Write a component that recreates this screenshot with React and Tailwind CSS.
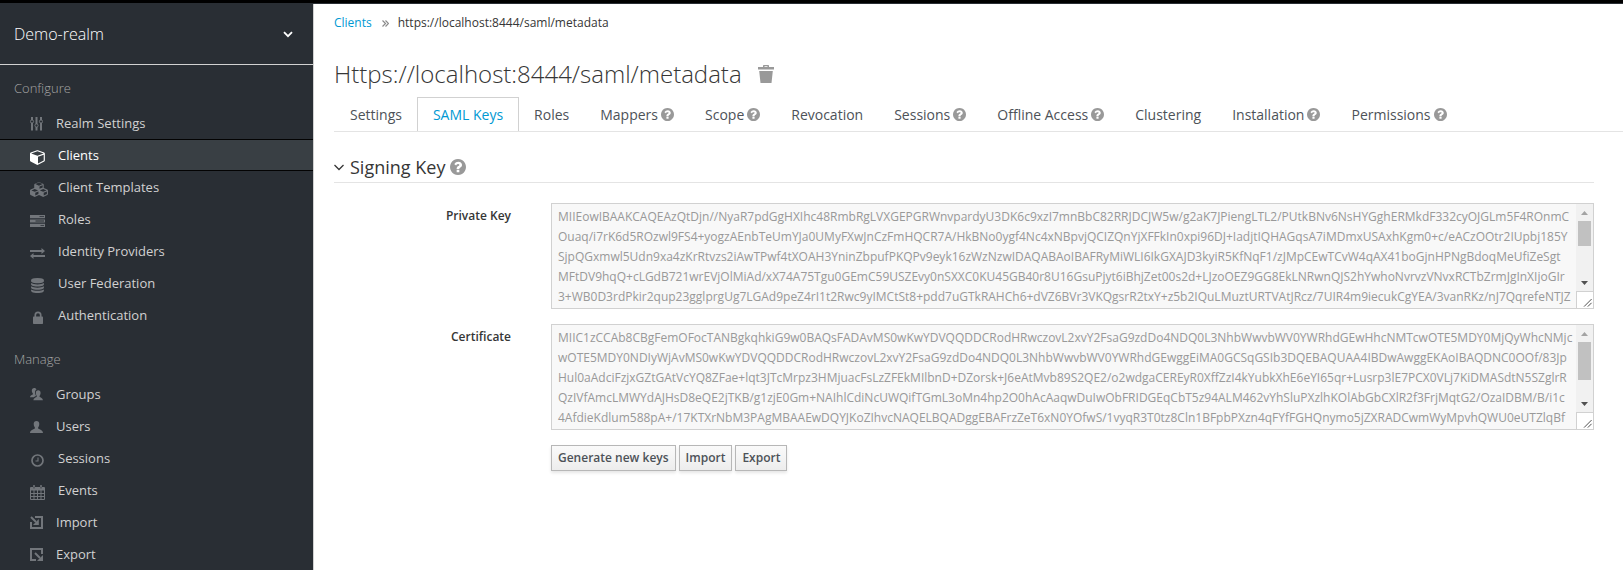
import React from "react";

const FA = {
  cube: ["0 0 1792 1792", "M896 1629l640-349v-636l-640 233v752zM832 764l698-254-698-254-698 254zM1664 512v768q0 35-18 65t-49 47l-704 384q-28 16-61 16t-61-16l-704-384q-31-17-49-47t-18-65v-768q0-40 23-73t61-47l704-256q22-8 44-8t44 8l704 256q38 14 61 47t23 73z"],
  cubes: ["0 0 2304 1792", "M640 1632l384-192v-314l-384 164v342zM576 1178l404-173-404-173-404 173zM1664 1632l384-192v-314l-384 164v342zM1600 1178l404-173-404-173-404 173zM1152 807l384-165v-266l-384 164v267zM1088 428l441-189-441-189-441 189zM2176 1024v416q0 36-19 67t-52 47l-448 224q-25 14-57 14t-57-14l-448-224q-5-2-7-4-2 2-7 4l-448 224q-25 14-57 14t-57-14l-448-224q-33-16-52-47t-19-67v-416q0-38 21.500-70t56.500-48l434-186v-400q0-38 21.500-70t56.500-48l448-192q23-10 50-10t50 10l448 192q35 16 56.500 48t21.500 70v400l434 186q36 16 57 48t21 70z"],
  database: ["128 0 1536 1792", "M896 768q237 0 443-43t325-127v170q0 69-103 128t-280 93.500-385 34.500-385-34.500-280-93.500-103-128v-170q119 84 325 127t443 43zm0 768q237 0 443-43t325-127v170q0 69-103 128t-280 93.500-385 34.500-385-34.500-280-93.500-103-128v-170q119 84 325 127t443 43zm0-384q237 0 443-43t325-127v170q0 69-103 128t-280 93.500-385 34.500-385-34.500-280-93.500-103-128v-170q119 84 325 127t443 43zm0-1152q208 0 385 34.500t280 93.500 103 128v128q0 69-103 128t-280 93.500-385 34.500-385-34.500-280-93.500-103-128v-128q0-69 103-128t280-93.500 385-34.500z"],
  help: ["128 128 1536 1536", "M1024 1376v-192q0-14-9-23t-23-9h-192q-14 0-23 9t-9 23v192q0 14 9 23t23 9h192q14 0 23-9t9-23zm256-672q0-88-55.500-163t-138.500-116-170-41q-243 0-371 213-15 24 8 42l132 100q7 6 19 6 16 0 25-12 53-68 86-92 34-24 86-24 48 0 85.500 26t37.500 59q0 38-20 61t-68 45q-63 28-115.500 86.500t-52.500 125.500v36q0 14 9 23t23 9h192q14 0 23-9t9-23q0-19 21.500-49.500t54.500-49.500q32-18 49-28.500t46-35 44.500-48 28-60.500 12.500-81zm384 192q0 209-103 385.500t-279.500 279.500-385.500 103-385.500-103-279.500-279.500-103-385.500 103-385.500 279.500-279.500 385.500-103 385.500 103 279.500 279.500 103 385.500z"],
};

function Glyph({ name, className }) {
  const [viewBox, d] = FA[name];
  return (
    <svg viewBox={viewBox} className={className} fill="currentColor" aria-hidden="true">
      <path d={d} />
    </svg>
  );
}

const icons = {
  sliders: (
    <svg viewBox="0 0 13 14" className="h-3.5 w-[13px]" aria-hidden="true">
      <g fill="currentColor">
        <rect x="1" y="0" width="2" height="3" /><rect x="1" y="6" width="2" height="7.500" />
        <rect x="5.500" y="0" width="2" height="7" /><rect x="5.500" y="10" width="2" height="3.500" />
        <rect x="10" y="0" width="2" height="3" /><rect x="10" y="6" width="2" height="7.500" />
      </g>
      <g fill="none" stroke="currentColor">
        <circle cx="2" cy="4.500" r="1.600" /><circle cx="6.500" cy="8.500" r="1.600" /><circle cx="11" cy="4.500" r="1.600" />
      </g>
    </svg>
  ),
  cube: <Glyph name="cube" className="size-4" />,
  cubes: <Glyph name="cubes" className="h-[15px] w-[19px]" />,
  tasks: (
    <svg viewBox="0 0 15 12" className="h-3 w-[15px]" fill="currentColor" aria-hidden="true">
      <path fillRule="evenodd" d="M0 0h15v3.200H0zM9.500 1.200v.9H14v-.9zM0 4.400h15v3.200H0zM5.500 5.500v.9H14v-.9zM0 8.800h15V12H0zM10.500 9.900v.9H14v-.9z" />
    </svg>
  ),
  exchange: (
    <svg viewBox="0 0 15 11" className="h-[11px] w-[15px]" fill="currentColor" aria-hidden="true">
      <path d="M0 2h11.500V0L15 3l-3.500 3V4H0zM15 7H3.500V5L0 8l3.500 3V9H15z" />
    </svg>
  ),
  database: <Glyph name="database" className="h-[15px] w-[13px]" />,
  lock: (
    <svg viewBox="0 0 10 13" className="h-[13px] w-2.5" aria-hidden="true">
      <rect x="0" y="5.500" width="10" height="7.500" rx=".7" fill="currentColor" />
      <path d="M2.300 6V4a2.700 2.700 0 0 1 5.400 0v2" fill="none" stroke="currentColor" strokeWidth="1.700" />
    </svg>
  ),
  groups: (
    <svg viewBox="0 0 13 13" className="size-[13px]" fill="currentColor" aria-hidden="true">
      <path d="M1.800 2.800C1.800 1 2.700 0 4.200 0c1.200 0 2 .6 2.300 1.600C5.300 2.300 4.900 3.500 5 5c.1 1 .4 1.800 1 2.500-.2.800-1.400 1-2.300 1.700H0c.1-1.700 1.300-2 2.700-2.700.4-.3.400-.8 0-1.300C2 4.500 1.800 3.700 1.800 2.800z" />
      <path d="M5.800 5c0-1.800.9-2.800 2.400-2.800s2.400 1 2.400 2.800c0 .9-.2 1.700-.8 2.400-.4.500-.4 1.200 0 1.500 1.400.8 3 1.200 3.100 3.300H3.400c.1-2.100 1.700-2.500 3.100-3.300.4-.3.400-1 0-1.500-.5-.7-.7-1.500-.7-2.400z" />
    </svg>
  ),
  user: (
    <svg viewBox="0 0 13 12" className="h-3 w-[13px]" fill="currentColor" aria-hidden="true">
      <path d="M3.700 3C3.700 1.100 4.700 0 6.500 0s2.800 1.100 2.800 3c0 1.300-.3 2.400-1 3.200-.4.500-.3 1.200.2 1.500C10.400 8.700 12.800 9 13 12H0c.2-3 2.600-3.300 4.500-4.300.5-.3.600-1 .2-1.500-.7-.8-1-1.900-1-3.200z" />
    </svg>
  ),
  clock: (
    <svg viewBox="0 0 13 13" className="size-[13px]" fill="none" stroke="currentColor" aria-hidden="true">
      <circle cx="6.500" cy="6.500" r="5.500" strokeWidth="1.700" />
      <path d="M7 3.500V7H4.500" strokeWidth="1.100" />
    </svg>
  ),
  calendar: (
    <svg viewBox="0 0 15 15" className="size-[15px]" fill="currentColor" aria-hidden="true">
      <path fillRule="evenodd" d="M0 3Q0 2 1 2h2V1.200Q3 0 4 0t1 1.200V2h5V1.200Q10 0 11 0t1 1.200V2h2q1 0 1 1v11q0 1-1 1H1q-1 0-1-1zM1 5.500V8h2.500V5.500zm3.500 0V8H7V5.500zM8 5.500V8h2.500V5.500zm3.500 0V8H14V5.500zM1 9v2h2.500V9zm3.500 0v2H7V9zM8 9v2h2.500V9zm3.500 0v2H14V9zM1 12v2h2.500v-2zm3.500 0v2H7v-2zM8 12v2h2.500v-2zm3.500 0v2H14v-2zM3.600 1.500v2h.8v-2zm7 0v2h.8v-2z" />
    </svg>
  ),
  importBox: (
    <svg viewBox="0 0 13 13" className="size-[13px]" aria-hidden="true">
      <path d="M5 1h7v11H1V6" fill="none" stroke="currentColor" strokeWidth="2" />
      <path d="M1 1l5 5" stroke="currentColor" strokeWidth="2" />
      <path d="M8.800 3v6H3z" fill="currentColor" />
    </svg>
  ),
  exportBox: (
    <svg viewBox="0 0 13 13" className="size-[13px]" aria-hidden="true">
      <path d="M12 6V1H1v11h5" fill="none" stroke="currentColor" strokeWidth="2" />
      <path d="M5 5l5 5" stroke="currentColor" strokeWidth="2" />
      <path d="M13 7v6H7z" fill="currentColor" />
    </svg>
  ),
};

const configure = [
  ["Realm Settings", "sliders", false],
  ["Clients", "cube", true],
  ["Client Templates", "cubes", true],
  ["Roles", "tasks", true],
  ["Identity Providers", "exchange", true],
  ["User Federation", "database", true],
  ["Authentication", "lock", true],
];
const manage = [
  ["Groups", "groups", false],
  ["Users", "user", false],
  ["Sessions", "clock", true],
  ["Events", "calendar", true],
  ["Import", "importBox", false],
  ["Export", "exportBox", false],
];

function NavList({ items, active }) {
  return (
    <ul>
      {items.map(([label, icon, wide]) => {
        const on = label === active;
        return (
          <li key={label}>
            <a
              href="#"
              aria-current={on ? "page" : undefined}
              className={
                "flex h-8 items-center pl-[30px] pt-0.5 text-[13px] " +
                (on ? "border-y border-[#030303] bg-[#393f44] text-white" : "text-[#d1d1d1]")
              }
            >
              <span
                className={
                  "flex shrink-0 items-center " +
                  (wide ? "w-7 pt-0.5 " : "w-[26px] pb-px ") +
                  (on ? "text-white" : "text-[#72767b]")
                }
              >
                <span className={"flex justify-center " + (wide ? "min-w-[15px]" : "min-w-[13px]")}>{icons[icon]}</span>
              </span>
              {label}
            </a>
          </li>
        );
      })}
    </ul>
  );
}

const tabs = [
  ["Settings", false],
  ["SAML Keys", false],
  ["Roles", false],
  ["Mappers", true],
  ["Scope", true],
  ["Revocation", false],
  ["Sessions", true],
  ["Offline Access", true],
  ["Clustering", false],
  ["Installation", true],
  ["Permissions", true],
];

const privateKey = [
  "MIIEowIBAAKCAQEAzQtDjn//NyaR7pdGgHXIhc48RmbRgLVXGEPGRWnvpardyU3DK6c9xzI7mnBbC82RRJDCJW5w/g2aK7JPiengLTL2/PUtkBNv6NsHYGghERMkdF332cyOJGLm5F4ROnmC",
  "Ouaq/i7rK6d5ROzwl9FS4+yogzAEnbTeUmYJa0UMyFXwJnCzFmHQCR7A/HkBNo0ygf4Nc4xNBpvjQCIZQnYjXFFkIn0xpi96DJ+IadjtIQHAGqsA7iMDmxUSAxhKgm0+c/eACzOOtr2IUpbj185Y",
  "SjpQGxmwl5Udn9xa4zKrRtvzs2iAwTPwf4tXOAH3YninZbpufPKQPv9eyk16zWzNzwIDAQABAoIBAFRyMiWLI6IkGXAJD3kyiR5KfNqF1/zJMpCEwTCvW4qAX41boGjnHPNgBdoqMeUfiZeSgt",
  "MFtDV9hqQ+cLGdB721wrEVjOlMiAd/xX74A75Tgu0GEmC59USZEvy0nSXXC0KU45GB40r8U16GsuPjyt6iBhjZet00s2d+LJzoOEZ9GG8EkLNRwnQJS2hYwhoNvrvzVNvxRCTbZrmJgInXIjoGIr",
  "3+WB0D3rdPkir2qup23gglprgUg7LGAd9peZ4rI1t2Rwc9yIMCtSt8+pdd7uGTkRAHCh6+dVZ6BVr3VKQgsrR2txY+z5b2IQuLMuztURTVAtJRcz/7UIR4m9iecukCgYEA/3vanRKz/nJ7QqrefeNTJZ",
].join("\n");

const certificate = [
  "MIIC1zCCAb8CBgFemOFocTANBgkqhkiG9w0BAQsFADAvMS0wKwYDVQQDDCRodHRwczovL2xvY2FsaG9zdDo4NDQ0L3NhbWwvbWV0YWRhdGEwHhcNMTcwOTE5MDY0MjQyWhcNMjc",
  "wOTE5MDY0NDIyWjAvMS0wKwYDVQQDDCRodHRwczovL2xvY2FsaG9zdDo4NDQ0L3NhbWwvbWV0YWRhdGEwggEiMA0GCSqGSIb3DQEBAQUAA4IBDwAwggEKAoIBAQDNC0OOf/83Jp",
  "Hul0aAdciFzjxGZtGAtVcYQ8ZFae+lqt3JTcMrpz3HMjuacFsLzZFEkMIlbnD+DZorsk+J6eAtMvb89S2QE2/o2wdgaCEREyR0XffZzI4kYubkXhE6eYI65qr+Lusrp3lE7PCX0VLj7KiDMASdtN5SZglrR",
  "QzIVfAmcLMWYdAJHsD8eQE2jTKB/g1zjE0Gm+NAIhlCdiNcUWQifTGmL3oMn4hp2O0hAcAaqwDuIwObFRIDGEqCbT5z94ALM462vYhSluPXzlhKOlAbGbCXlR2f3FrjMqtG2/OzaIDBM/B/i1c",
  "4AfdieKdlum588pA+/17KTXrNbM3PAgMBAAEwDQYJKoZIhvcNAQELBQADggEBAFrzZeT6xN0YOfwS/1vyqR3T0tz8Cln1BFpbPXzn4qFYfFGHQnymo5jZXRADCwmWyMpvhQWU0eUTZlqBf",
].join("\n");

function KeyField({ id, label, value, thumb }) {
  return (
    <div className="flex">
      <div className="w-[217px] shrink-0 pr-10 pt-[3px] text-right">
        <label htmlFor={id} className="text-[12px] font-semibold leading-5 text-[#363636]">{label}</label>
      </div>
      <div className="flex min-w-0 flex-1 border border-[#d1d1d1] bg-[#f8f8f8]">
        <textarea
          id={id}
          readOnly
          wrap="off"
          rows={5}
          defaultValue={value}
          className="block min-w-0 flex-1 resize-none overflow-hidden whitespace-pre bg-transparent pb-px pl-1.5 pt-[3px] text-[12px] leading-5 text-[#999] outline-none"
        />
        <div className="flex w-[17px] shrink-0 flex-col" aria-hidden="true">
          <div className="flex flex-1 flex-col bg-[#f1f1f1]">
            <svg viewBox="0 0 17 17" className="size-[17px]"><path d="M5 11h7L8.500 7z" fill="#a3a3a3" /></svg>
            <div className="flex flex-1 flex-col px-[2px]">
              <div className={"bg-[#c1c1c1] " + thumb} />
            </div>
            <svg viewBox="0 0 17 17" className="size-[17px]"><path d="M5 7h7l-3.500 4z" fill="#505050" /></svg>
          </div>
          <svg viewBox="0 0 17 17" className="size-[17px] border-l border-t border-[#d1d1d1] bg-white">
            <path d="M7.500 15.500l8-8M11.500 15.500l4-4" stroke="#444" fill="none" />
          </svg>
        </div>
      </div>
    </div>
  );
}

export default function App() {
  return (
    <div className="flex h-screen flex-col overflow-hidden bg-white font-['Open_Sans',sans-serif] text-[12px] text-[#363636]">
      <div className="h-1 shrink-0 border-b border-[#292e34] bg-black" />
      <div className="flex min-h-0 flex-1">
        <nav className="w-[314px] shrink-0 overflow-hidden border-r border-[#d1d1d1] bg-[#292e34]">
          <button type="button" className="flex h-[61px] w-full items-center justify-between border-b border-[#d1d1d1] pl-3.5 pr-5 text-[16px] font-light text-white">
            Demo-realm
            <svg viewBox="0 0 10 7" className="h-[7px] w-2.5" fill="none" stroke="currentColor" strokeWidth="1.800" aria-hidden="true">
              <path d="M1 1.200l4 4 4-4" />
            </svg>
          </button>
          <h2 className="pb-[9px] pl-3.5 pt-[13px] text-[13px] font-light leading-5 text-[#a5a5a5]">Configure</h2>
          <NavList items={configure} active="Clients" />
          <h2 className="pb-[9px] pl-3.5 pt-[18px] text-[13px] font-light leading-5 text-[#a5a5a5]">Manage</h2>
          <NavList items={manage} />
        </nav>

        <main className="min-w-0 flex-1 overflow-hidden pl-5">
          <nav aria-label="Breadcrumb" className="flex items-center pt-[9px] leading-5">
            <a href="#" className="text-[#0099d3]">Clients</a>
            <svg viewBox="0 0 7 7" className="ml-2.5 mr-[9px] size-[7px]" fill="none" stroke="#8b8b8b" strokeWidth="1.200" aria-hidden="true">
              <path d="M.5.500l3 3-3 3M3.500.500l3 3-3 3" />
            </svg>
            <span>https://localhost:8444/saml/metadata</span>
          </nav>

          <div className="flex items-center pt-[22px]">
            <h1 className="text-[24px] font-light leading-[38px]">Https://localhost:8444/saml/metadata</h1>
            <button type="button" aria-label="Delete client" className="ml-4 text-[#999]">
              <svg viewBox="0 0 16 18" className="h-[18px] w-4" fill="currentColor" aria-hidden="true">
                <path fillRule="evenodd" d="M0 2h5V.8Q5 0 5.800 0h4.400q.8 0 .8.800V2h5v2.500H0zM6.500 1.300V2h3v-.7zM1.200 6h13.600l-1.300 12H2.500z" />
              </svg>
            </button>
          </div>

          <ul className="flex border-b border-[#e4e4e4] pl-px pt-1 text-[14px]">
            {tabs.map(([label, help]) => {
              const on = label === "SAML Keys";
              return (
                <li key={label} className={on ? "-mb-px -ml-px" : "-ml-px"}>
                  <a
                    href="#"
                    aria-current={on ? "page" : undefined}
                    className={
                      "flex h-[34px] items-center gap-[3px] border-x border-t px-[15px] " +
                      (on ? "border-[#d1d1d1] bg-white text-[#0099d3]" : "border-transparent text-[#4d5258]")
                    }
                  >
                    {label}
                    {help && <Glyph name="help" className="size-[13px] text-[#999]" />}
                  </a>
                </li>
              );
            })}
          </ul>

          <div className="pr-[29px] pt-[21px]">
            <h2 className="flex items-center border-b border-[#e4e4e4] pb-px text-[18px] leading-[28px]">
              <svg viewBox="0 0 10 7" className="mr-1.5 h-[7px] w-2.5" fill="none" stroke="currentColor" strokeWidth="1.300" aria-hidden="true">
                <path d="M.5 1l4.500 4.500L9.500 1" />
              </svg>
              Signing Key
              <Glyph name="help" className="ml-[5px] size-4 text-[#999]" />
            </h2>

            <form className="flex flex-col gap-[15px] pt-5">
              <KeyField id="private-key" label="Private Key" value={privateKey} thumb="h-[25px]" />
              <KeyField id="certificate" label="Certificate" value={certificate} thumb="h-[38px]" />
              <div className="flex gap-[3px] pl-[217px]">
                {["Generate new keys", "Import", "Export"].map((label) => (
                  <button
                    key={label}
                    type="button"
                    className="border border-[#b7b7b7] bg-linear-to-b from-[#fafafa] to-[#ededed] px-1.5 py-[2px] text-[12px] font-semibold leading-5 text-[#4d5258] shadow-[0_2px_3px_rgba(3,3,3,0.1)]"
                  >
                    {label}
                  </button>
                ))}
              </div>
            </form>
          </div>
        </main>
      </div>
    </div>
  );
}
